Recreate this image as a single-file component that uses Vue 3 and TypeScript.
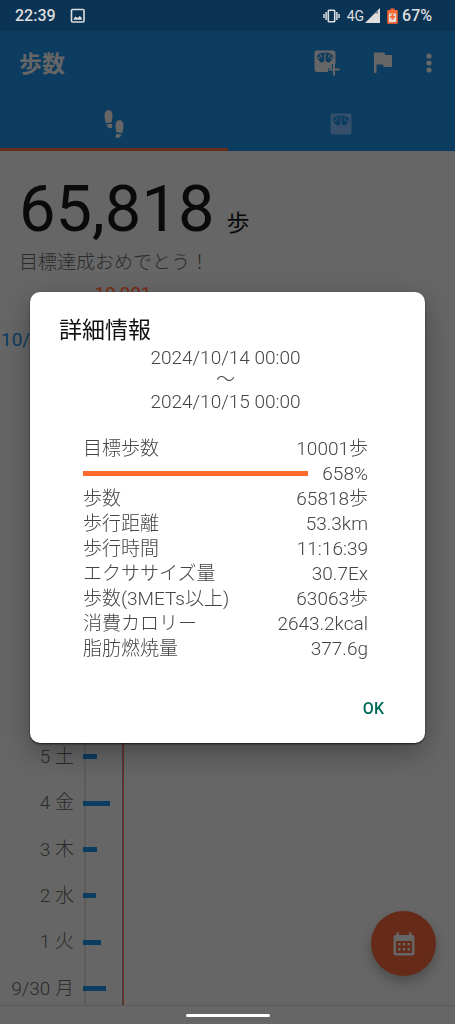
<script setup lang="ts">
interface Detail {
  label: string
  value: string
}

interface Day {
  label: string
  width: number
}

const goal: Detail = { label: '目標歩数', value: '10001歩' }

const details: Detail[] = [
  { label: '歩数', value: '65818歩' },
  { label: '歩行距離', value: '53.3km' },
  { label: '歩行時間', value: '11:16:39' },
  { label: 'エクササイズ量', value: '30.7Ex' },
  { label: '歩数(3METs以上)', value: '63063歩' },
  { label: '消費カロリー', value: '2643.2kcal' },
  { label: '脂肪燃焼量', value: '377.6g' },
]

const days: Day[] = [
  { label: '5 土', width: 14 },
  { label: '4 金', width: 27 },
  { label: '3 木', width: 14 },
  { label: '2 水', width: 13 },
  { label: '1 火', width: 18 },
  { label: '9/30 月', width: 23 },
]
</script>

<template>
  <div class="screen">
    <header class="status">
      <span class="clock">22:39</span>
      <svg class="picture" viewBox="0 0 16 16" width="16" height="16" aria-hidden="true">
        <rect x="1.5" y="1.5" width="12.5" height="12.5" rx="1" fill="none" stroke="currentColor" stroke-width="1.6" />
        <path d="M3.8 11.7V10.2L5.7 8.6L7.5 10L9.8 8L11.8 10V11.7Z" fill="currentColor" />
      </svg>
      <span class="spacer"></span>
      <svg class="vibrate" viewBox="0 0 17 14" width="17" height="14" aria-hidden="true">
        <rect x="5.3" y="1.3" width="6.4" height="11.4" rx="0.8" fill="none" stroke="currentColor" stroke-width="1.6" />
        <path d="M3.1 3V11M13.9 3V11M1 5V9M16 5V9" stroke="currentColor" stroke-width="1.5" />
      </svg>
      <span class="network">4G</span>
      <svg class="signal" viewBox="0 0 15 15" width="15" height="15" aria-hidden="true">
        <path d="M0 15L15 0V15Z" fill="currentColor" />
        <path d="M9.5 5.5L13 2V5.5Z" fill="#7f8890" />
      </svg>
      <svg class="battery" viewBox="0 0 11 16" width="11" height="16" aria-hidden="true">
        <path d="M3.5 0.5H7.5V2H10Q10.7 2 10.7 3V15Q10.7 15.7 10 15.7H1Q0.3 15.7 0.3 15V3Q0.3 2 1 2H3.5Z" fill="#ff6933" />
        <path d="M2 5.5H9V14H2Z" fill="#ddd" />
        <path d="M5.5 5.8V11.8M3 8.8H8" stroke="#ff6933" stroke-width="1.8" />
      </svg>
      <span class="percent">67%</span>
    </header>

    <div class="toolbar">
      <h1>歩数</h1>
      <button type="button" class="tool" aria-label="体重を追加">
        <svg viewBox="0 0 26 26" width="26" height="26">
          <path d="M3 0.5H19Q21.5 0.5 21.5 3V14H18V18H14V22H3Q0.5 22 0.5 19.5V3Q0.5 0.5 3 0.5Z" fill="currentColor" />
          <path d="M2.5 7.5Q3.5 2.5 11 2.5Q18.5 2.5 19.5 7.5L15.5 12.5Q13 13 11 10.5Q9 13 6.5 12.5Z" fill="#0d3c61" />
          <path d="M11 3.5V12M3.5 7L6 8.5M6 4.5L8 7.5M18.5 7L16 8.5M16 4.5L14 7.5" stroke="currentColor" stroke-width="1.3" />
          <path d="M20 14V25.5M14.5 19.5H25.5" stroke="currentColor" stroke-width="2" />
        </svg>
      </button>
      <button type="button" class="tool" aria-label="目標">
        <svg viewBox="0 0 26 26" width="26" height="26">
          <path d="M4 2.5H14.5L15 5H22V17H13.5L13 14.5H6.5V23H4Z" fill="currentColor" />
        </svg>
      </button>
      <button type="button" class="tool" aria-label="その他">
        <svg viewBox="0 0 6 20" width="6" height="20">
          <circle cx="3" cy="3" r="2.6" fill="currentColor" />
          <circle cx="3" cy="10" r="2.6" fill="currentColor" />
          <circle cx="3" cy="17" r="2.6" fill="currentColor" />
        </svg>
      </button>
    </div>

    <nav class="tabs">
      <button type="button" class="tab active" aria-label="歩数">
        <svg viewBox="0 0 20 28" width="20" height="28">
          <path d="M4.5 0Q8.5 0 8.5 6Q8.5 9 7.5 12.5L1.800 13.2Q0.5 9 0.5 6Q0.5 0.5 4.5 0Z" fill="currentColor" />
          <path d="M2.2 14.5L7.7 13.8Q9 17 7.5 18Q4 19 2.2 14.5Z" fill="currentColor" />
          <path d="M15.5 10Q19.5 10.5 19.5 16Q19.5 19 18.2 23L12.5 22.3Q11.5 19 11.5 16Q11.5 10 15.5 10Z" fill="currentColor" />
          <path d="M12.2 23.7L17.7 24.4Q16 28.5 12.5 28Q10.8 27.5 12.2 23.7Z" fill="currentColor" />
        </svg>
      </button>
      <button type="button" class="tab" aria-label="体重">
        <svg viewBox="0 0 22 22" width="22" height="22">
          <rect x="0.5" y="0.5" width="21" height="21" rx="2" fill="currentColor" />
          <path d="M2.5 7.5Q3.5 2.5 11 2.5Q18.5 2.5 19.5 7.5L15.5 12.5Q13 13 11 10.5Q9 13 6.5 12.5Z" fill="#0d3c61" />
          <path d="M11 3.5V12M3.5 7L6 8.5M6 4.5L8 7.5M18.5 7L16 8.5M16 4.5L14 7.5" stroke="currentColor" stroke-width="1.3" />
        </svg>
      </button>
    </nav>

    <main class="content">
      <p class="total"><span class="count">65,818</span><span class="unit">歩</span></p>
      <p class="praise">目標達成おめでとう！</p>
      <p class="goal-label">10,001</p>
      <div class="chart">
        <div class="day current">10/14</div>
        <div class="covered"></div>
        <div v-for="day in days" :key="day.label" class="day">
          <span class="day-label">{{ day.label }}</span>
          <span class="bar" :style="{ width: day.width + 'px' }"></span>
        </div>
      </div>
    </main>

    <footer class="navigation"><span class="handle"></span></footer>

    <button type="button" class="fab" aria-label="カレンダー">
      <svg viewBox="0 0 22 24" width="22" height="24">
        <path d="M3.5 0.5H6V3H16V0.5H18.5V3H19Q21.5 3 21.5 5.5V21Q21.5 23.5 19 23.5H3Q0.5 23.5 0.5 21V5.5Q0.5 3 3 3H3.5ZM3 9V21H19V9Z" fill="currentColor" fill-rule="evenodd" />
        <path d="M5 11H7.5V13.5H5ZM9.8 11H12.3V13.5H9.8ZM14.6 11H17.1V13.5H14.6ZM5 16H7.5V18.5H5ZM9.8 16H12.3V18.5H9.8ZM14.6 16H17.1V18.5H14.6Z" fill="currentColor" />
      </svg>
    </button>

    <div class="overlay">
      <section class="dialog" role="dialog" aria-modal="true" aria-labelledby="dialog-title">
        <h2 id="dialog-title">詳細情報</h2>
        <div class="dialog-body">
          <div class="period">
            <div>2024/10/14 00:00</div>
            <div>～</div>
            <div>2024/10/15 00:00</div>
          </div>
          <table>
            <tbody>
              <tr>
                <th scope="row">{{ goal.label }}</th>
                <td>{{ goal.value }}</td>
              </tr>
              <tr>
                <td colspan="2">
                  <div class="achievement">
                    <span class="progress"></span>
                    <span>658%</span>
                  </div>
                </td>
              </tr>
              <tr v-for="item in details" :key="item.label">
                <th scope="row">{{ item.label }}</th>
                <td>{{ item.value }}</td>
              </tr>
            </tbody>
          </table>
        </div>
        <div class="actions"><button type="button" class="ok">OK</button></div>
      </section>
    </div>
  </div>
</template>

<style>
body {
  margin: 0;
  background: #666;
}
</style>

<style scoped>
.screen {
  min-height: 100vh;
  display: flex;
  flex-direction: column;
  overflow: hidden;
  background: #666;
  color: #2b2b2b;
  font-family: Roboto, "Noto Sans CJK JP", sans-serif;
  font-size: 19px;
}

h1,
h2,
p {
  margin: 0;
}

button {
  border: 0;
  padding: 0;
  background: none;
  color: inherit;
  font-family: inherit;
}

svg {
  display: block;
}

.status {
  display: flex;
  align-items: center;
  height: 31px;
  padding: 0 23px 0 15px;
  background: #0a3354;
  color: #ddd;
  font-size: 16px;
  font-weight: 500;
}

.picture {
  margin-left: 14px;
}

.spacer {
  flex: 1;
}

.network {
  margin: 0 1px 0 7px;
  font-size: 14px;
  font-weight: 400;
}

.battery {
  margin: 0 4px 0 7px;
}

.toolbar {
  display: flex;
  align-items: center;
  height: 64px;
  padding: 0 23px 0 19px;
  background: #0d3c61;
  color: #666;
}

h1 {
  flex: 1;
  padding-top: 4px;
  font-size: 23px;
  line-height: 32px;
  font-weight: 700;
}

.tool {
  margin-left: 30px;
}

.tabs {
  display: flex;
  height: 56px;
  background: #0d3c61;
}

.tab {
  flex: 1;
  display: flex;
  align-items: center;
  justify-content: center;
  box-sizing: border-box;
  padding-top: 4px;
  border-bottom: 3px solid transparent;
  color: #36506b;
}

.tab.active {
  border-bottom-color: #6a2d1c;
  color: #666;
}

.content {
  flex: 1;
  display: flex;
  flex-direction: column;
}

.total {
  display: flex;
  align-items: baseline;
  gap: 12px;
  padding: 20px 19px 0;
  color: #0a0a0a;
}

.count {
  font-size: 65px;
  line-height: 76px;
}

.unit {
  font-size: 23px;
  line-height: 24px;
}

.praise {
  padding: 2px 19px 0;
  line-height: 28px;
  font-weight: 300;
}

.goal-label {
  width: 246px;
  padding-top: 5px;
  line-height: 24px;
  text-align: center;
  color: #7a2a12;
}

.chart {
  flex: 1;
  display: grid;
  grid-template-rows: repeat(15, 1fr);
  padding-top: 10px;
  background:
    linear-gradient(#5c5c5c, #5c5c5c) 84px 0 / 2px 100% no-repeat,
    linear-gradient(#444, #444) 122px 0 / 1px 100% no-repeat,
    linear-gradient(#70291a, #70291a) 123px 0 / 1px 100% no-repeat;
}

.day {
  display: flex;
  align-items: center;
  gap: 9px;
}

.current {
  padding-left: 1px;
  color: #0d3c61;
}

.covered {
  grid-row: span 8;
}

.day-label {
  width: 74px;
  text-align: right;
  white-space: nowrap;
  line-height: 24px;
  font-weight: 300;
}

.bar {
  height: 5px;
  background: #0d3c61;
}

.navigation {
  display: flex;
  justify-content: center;
  box-sizing: border-box;
  height: 19px;
  margin-top: -7px;
  padding-top: 8px;
  border-top: 1px solid #5a5a5a;
  background: #666;
  z-index: 0;
}

.handle {
  width: 84px;
  height: 3px;
  border-radius: 2px;
  background: #fff;
}

.fab {
  position: fixed;
  right: 19px;
  bottom: 48px;
  display: flex;
  align-items: center;
  justify-content: center;
  width: 65px;
  height: 65px;
  border-radius: 50%;
  background: #662b18;
  color: #666;
  box-shadow: 0 6px 12px rgba(0, 0, 0, 0.25);
}

.overlay {
  position: fixed;
  inset: 0;
  display: flex;
  align-items: center;
  justify-content: center;
  padding: 11px 30px 0;
}

.dialog {
  flex: 1;
  box-sizing: border-box;
  padding: 25px 0 17px;
  border-radius: 10px;
  background: #fff;
  box-shadow: 0 1px 2px rgba(0, 0, 0, 0.7), 0 10px 28px rgba(0, 0, 0, 0.3);
}

h2 {
  padding-left: 29px;
  color: #111;
  font-size: 23px;
  line-height: 28px;
  font-weight: 400;
}

.dialog-body {
  padding: 2px 57px 0 53px;
  color: #444;
  font-size: 19px;
  font-weight: 300;
}

.period {
  text-align: center;
  line-height: 22px;
}

table {
  width: 100%;
  margin-top: 23px;
  border-collapse: collapse;
  line-height: 25px;
}

th,
td {
  height: 25px;
  padding: 0;
  text-align: right;
  font-weight: 300;
  white-space: nowrap;
}

th {
  text-align: left;
}

.achievement {
  display: flex;
  align-items: center;
  gap: 14px;
}

.progress {
  flex: 1;
  height: 5px;
  background: #ff6a2c;
}

.actions {
  display: flex;
  justify-content: flex-end;
  margin-top: 29px;
  padding-right: 33px;
}

.ok {
  height: 36px;
  padding: 0 8px;
  color: #006b5b;
  font-size: 16px;
  font-weight: 500;
}
</style>
